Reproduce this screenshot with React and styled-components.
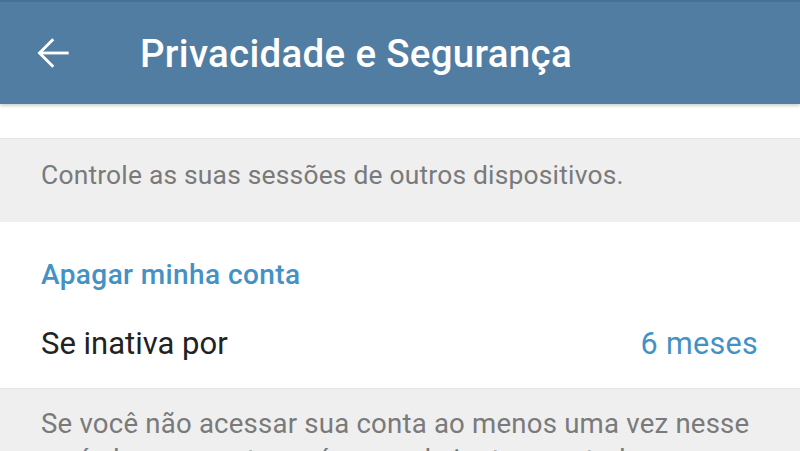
import React from 'react';
import styled, { createGlobalStyle } from 'styled-components';

const GlobalStyle = createGlobalStyle`
    html, body {
        margin: 0;
        padding: 0;
        background: #ffffff;
        font-family: Roboto, "Noto Sans", "Liberation Sans", sans-serif;
        overflow: hidden;
    }
`;

function BackArrow() {
    return (
        <svg width="36" height="36" viewBox="0 0 24 24" fill="none" stroke="#ffffff" strokeWidth="1.9" strokeLinecap="square">
            <path d="M21.5 12H3.5" />
            <path d="M11.5 3.5L3 12L11.5 20.5" />
        </svg>
    );
}

export default function App() {
    return (
        <Page>
            <GlobalStyle />
            <Header>
                <BackButton>
                    <BackArrow />
                </BackButton>
                <Title>Privacidade e Segurança</Title>
            </Header>
            <Spacer />
            <Hint>Controle as suas sessões de outros dispositivos.</Hint>
            <Section>
                <SectionTitle>Apagar minha conta</SectionTitle>
                <Row>
                    <RowLabel>Se inativa por</RowLabel>
                    <RowValue>6 meses</RowValue>
                </Row>
            </Section>
            <Hint $footer>
                Se você não acessar sua conta ao menos uma vez nesse
                <br />
                período, sua conta será apagada junto com todos os seus
                grupos, mensagens e contatos.
            </Hint>
        </Page>
    );
}

const Page = styled.div`
    width: 800px;
    height: 451px;
    overflow: hidden;
    background: #efefef;
`;

const Header = styled.header`
    height: 104px;
    background: #517da2;
    border-top: 2px solid #44709a;
    box-sizing: border-box;
    display: flex;
    align-items: center;
    box-shadow: 0 2px 3px rgba(0, 0, 0, 0.18);
    position: relative;
    z-index: 1;
`;

const BackButton = styled.div`
    width: 140px;
    padding-left: 35px;
    box-sizing: border-box;
    display: flex;
    align-items: center;
`;

const Title = styled.h1`
    margin: 0;
    color: #ffffff;
    font-size: 38.5px;
    font-weight: 500;
    letter-spacing: 0.3px;
`;

const Spacer = styled.div`
    height: 34px;
    background: #ffffff;
`;

const Section = styled.section`
    background: #ffffff;
    padding: 36px 41px 14px;
`;

const Hint = styled.p`
    margin: 0;
    padding: ${(p) => (p.$footer ? '17px 41px 0' : '20px 41px 31px')};
    border-top: 1px solid #e4e4e4;
    color: #7a7a7a;
    font-size: ${(p) => (p.$footer ? '27.6px' : '26.4px')};
    line-height: ${(p) => (p.$footer ? '36px' : '32px')};
    letter-spacing: 0.2px;
    white-space: nowrap;
`;

const SectionTitle = styled.div`
    color: #4292c6;
    font-size: 28px;
    font-weight: 500;
    letter-spacing: 0.4px;
    line-height: 34px;
`;

const Row = styled.div`
    display: flex;
    justify-content: space-between;
    align-items: center;
    height: 62px;
    margin-top: 20px;
    padding-right: 1px;
`;

const RowLabel = styled.span`
    color: #222222;
    font-size: 31px;
`;

const RowValue = styled.span`
    color: #4292c6;
    font-size: 30.5px;
    letter-spacing: 0.3px;
`;
